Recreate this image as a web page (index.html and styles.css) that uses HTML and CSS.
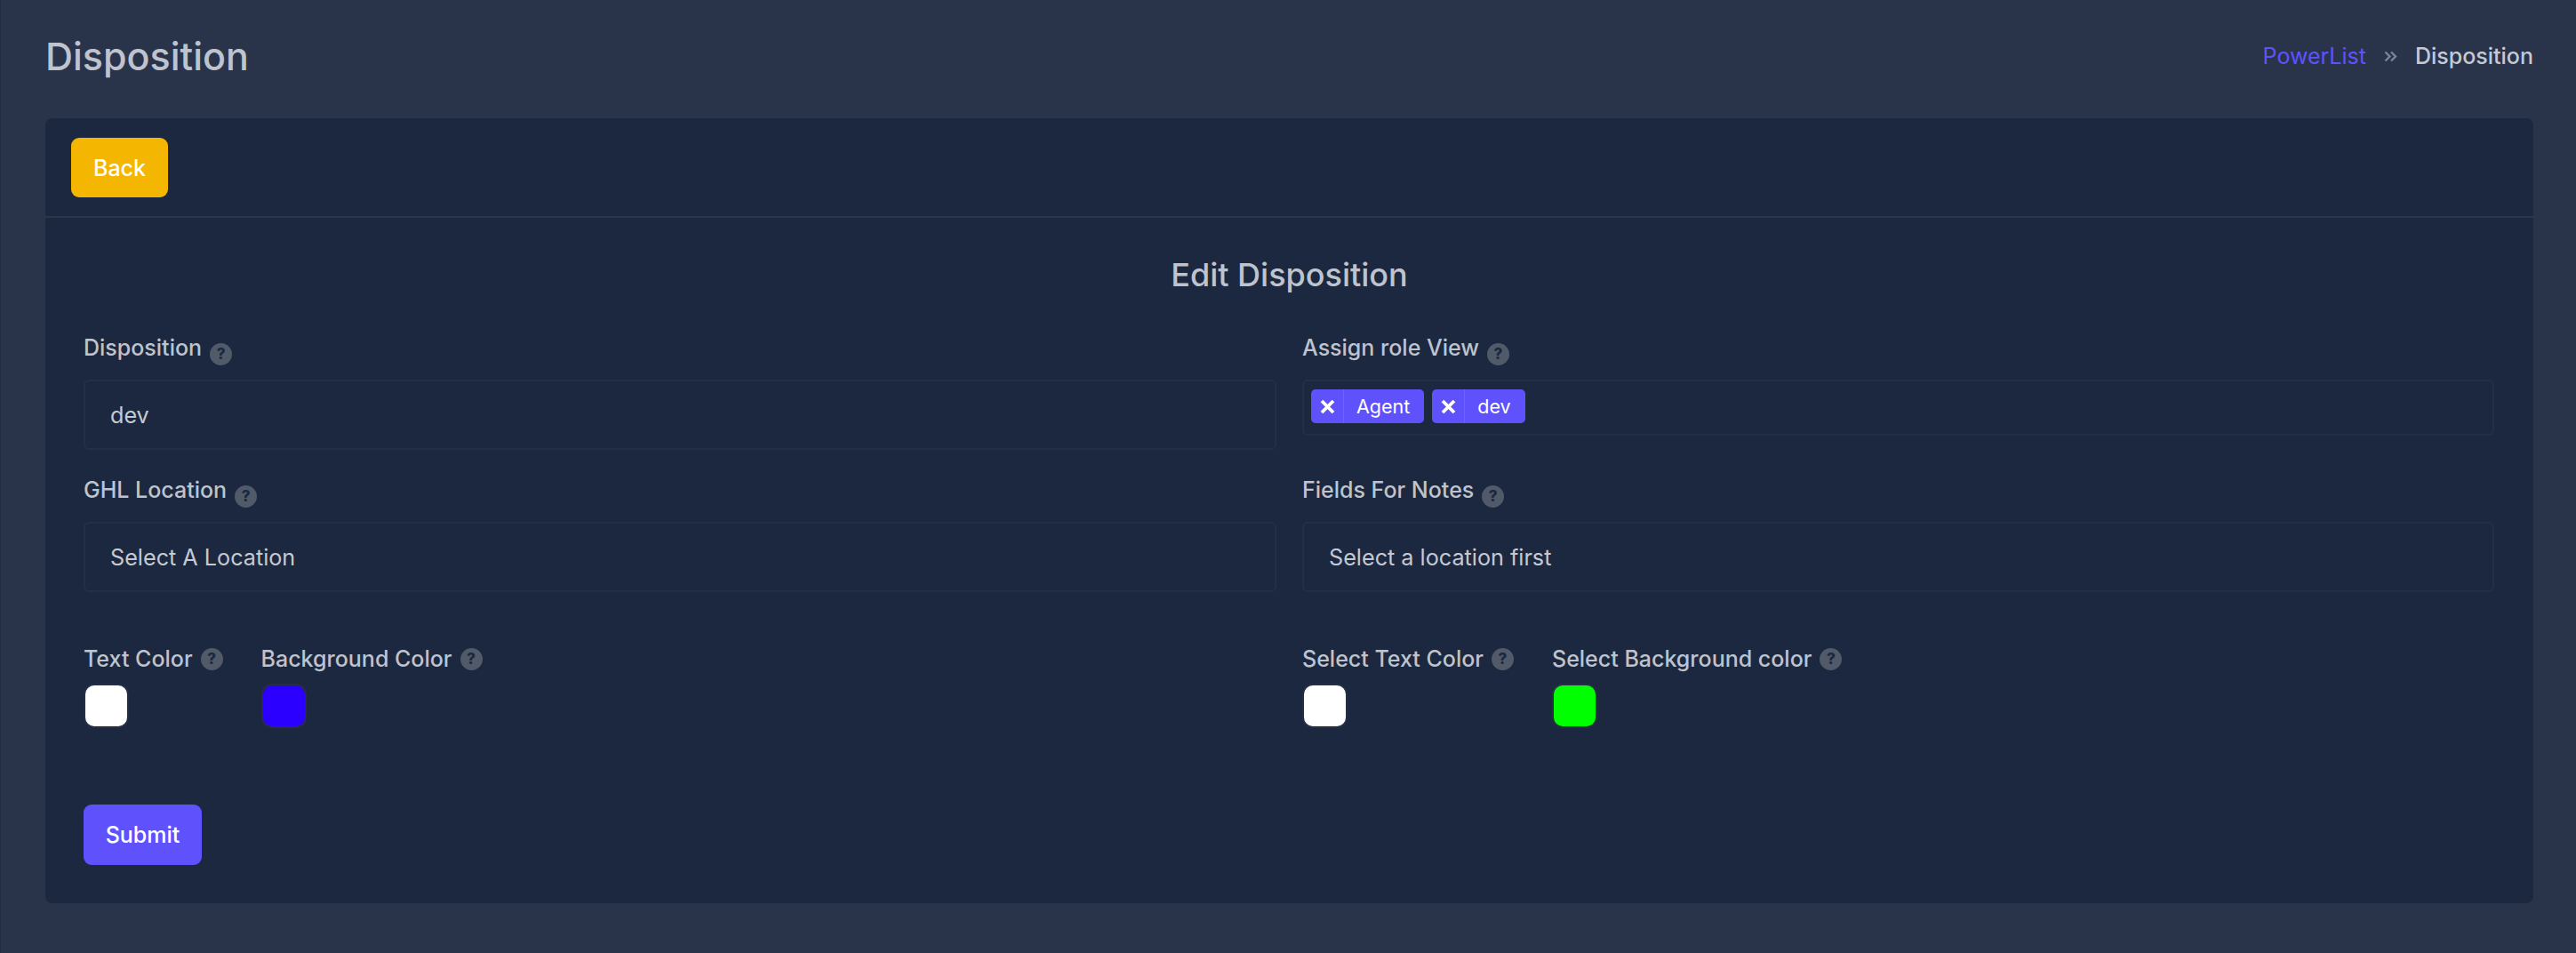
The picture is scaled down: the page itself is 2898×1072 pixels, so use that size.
FILE: index.html
```html
<!DOCTYPE html>
<html lang="en">
<head>
<meta charset="utf-8">
<title>Disposition</title>
<link rel="stylesheet" href="styles.css">
</head>
<body>
<main class="page">
  <header class="page-head">
    <h1 class="page-title">Disposition</h1>
    <nav class="crumbs">
      <a class="crumb-link">PowerList</a>
      <svg class="crumb-sep" viewBox="0 0 15 15"><path d="M1.5 2.5 6.5 7.5 1.5 12.5M8 2.5 13 7.5 8 12.5"/></svg>
      <span class="crumb-current">Disposition</span>
    </nav>
  </header>
  <section class="card">
    <div class="card-head"><button class="btn btn-back">Back</button></div>
    <div class="card-body">
      <h2 class="form-title">Edit Disposition</h2>
      <div class="form-grid">
        <div class="field">
          <div class="label-row"><span class="label">Disposition</span><span class="help">?</span></div>
          <div class="input">dev</div>
        </div>
        <div class="field">
          <div class="label-row"><span class="label">Assign role View</span><span class="help">?</span></div>
          <div class="input input-tags">
            <span class="tag"><span class="tag-x"><svg viewBox="0 0 17 17"><path d="M2 2 15 15M15 2 2 15"/></svg></span><span class="tag-text">Agent</span></span>
            <span class="tag"><span class="tag-x"><svg viewBox="0 0 17 17"><path d="M2 2 15 15M15 2 2 15"/></svg></span><span class="tag-text">dev</span></span>
          </div>
        </div>
        <div class="field">
          <div class="label-row"><span class="label">GHL Location</span><span class="help">?</span></div>
          <div class="input">Select A Location</div>
        </div>
        <div class="field">
          <div class="label-row"><span class="label">Fields For Notes</span><span class="help">?</span></div>
          <div class="input">Select a location first</div>
        </div>
      </div>
      <div class="form-grid colors-grid">
        <div class="colors">
          <div class="color-field">
            <div class="label-row"><span class="label">Text Color</span><span class="help">?</span></div>
            <span class="swatch swatch-white"></span>
          </div>
          <div class="color-field">
            <div class="label-row"><span class="label">Background Color</span><span class="help">?</span></div>
            <span class="swatch swatch-blue"></span>
          </div>
        </div>
        <div class="colors">
          <div class="color-field">
            <div class="label-row"><span class="label">Select Text Color</span><span class="help">?</span></div>
            <span class="swatch swatch-white"></span>
          </div>
          <div class="color-field">
            <div class="label-row"><span class="label">Select Background color</span><span class="help">?</span></div>
            <span class="swatch swatch-green"></span>
          </div>
        </div>
      </div>
      <button class="btn btn-submit">Submit</button>
    </div>
  </section>
</main>
</body>
</html>
```
FILE: styles.css
```css
* { box-sizing: border-box; }
html, body { margin: 0; height: 100%; }
body {
  background: #29344b;
  color: #bec3cd;
  font-family: Inter, "Liberation Sans", sans-serif;
}
.page { padding: 0 48px 0 50px; height: 1072px; overflow: hidden; border-left: 1px solid #242e43; }
.page-head {
  height: 133px;
  display: flex;
  align-items: center;
  justify-content: space-between;
  padding-bottom: 7px;
}
.page-title { margin: 0; font-size: 43px; font-weight: 550; color: #bec3cd; }
.crumbs { display: flex; align-items: center; font-size: 25px; gap: 20px; }
.crumb-link { color: #5f52fd; }
.crumb-current { font-weight: 550; color: #c5c9d2; }
.crumb-sep { width: 15px; height: 15px; fill: none; stroke: #7c8494; stroke-width: 2.4; }
.card { background: #1c2840; border-radius: 8px; height: 883px; }
.card-head { height: 112px; padding: 22px 29px; border-bottom: 2px solid #2b3749; }
.btn {
  border: 0;
  border-radius: 9px;
  color: #fff;
  font-family: inherit;
  font-size: 25px;
  font-weight: 550;
}
.btn-back { width: 109px; height: 67px; background: #f4b600; }
.card-body { padding: 39px 43px 0; }
.form-title { margin: 0 0 40px; text-align: center; font-size: 36px; font-weight: 550; color: #bec3cd; line-height: 50px; }
.form-grid { display: grid; grid-template-columns: 1342px 1341px; column-gap: 29px; row-gap: 28px; }
.field { display: flex; flex-direction: column; justify-content: flex-start; }
.label-row { display: flex; align-items: center; height: 34px; margin-bottom: 19px; gap: 9px; }
.label { font-size: 25px; font-weight: 550; color: #bec3cd; line-height: 34px; }
.help {
  width: 25px;
  height: 25px;
  border-radius: 50%;
  background: #505a69;
  color: #1c2840;
  font-size: 17px;
  font-weight: 800;
  display: flex;
  align-items: center;
  justify-content: center;
  margin-top: 14px;
}
.input {
  height: 79px;
  border: 2px solid #242f44;
  border-radius: 6px;
  padding: 0 28px;
  display: flex;
  align-items: center;
  font-size: 25.2px;
  color: #c5c9d2;
}
.input-tags { height: 63px; padding: 0 8px 3px; gap: 9px; }
.tag {
  display: inline-flex;
  align-items: center;
  height: 38px;
  background: #5f52fd;
  border-radius: 5px;
  color: #fff;
  font-size: 21.5px;
}
.tag-x {
  width: 37px;
  height: 38px;
  display: flex;
  align-items: center;
  justify-content: center;
  border-right: 1px solid rgba(255, 255, 255, 0.1);
}
.tag-x svg { width: 17px; height: 17px; fill: none; stroke: #fff; stroke-width: 3.8; }
.tag-text { padding: 0 16px 0 14px; }
.colors-grid { margin-top: 58px; }
.colors { display: flex; gap: 43px; }
.color-field { display: flex; flex-direction: column; align-items: flex-start; }
.color-field .label-row { margin-bottom: 11px; }
.color-field .help { margin-top: 0; }
.swatch { display: block; width: 51px; height: 50px; border: 2px solid #242f44; border-radius: 12px; }
.swatch-white { background: #fff; }
.swatch-blue { background: #2b00ff; }
.swatch-green { background: #00ff00; }
.btn-submit { display: block; width: 133px; height: 68px; margin-top: 86px; background: #5f52fd; }
```
